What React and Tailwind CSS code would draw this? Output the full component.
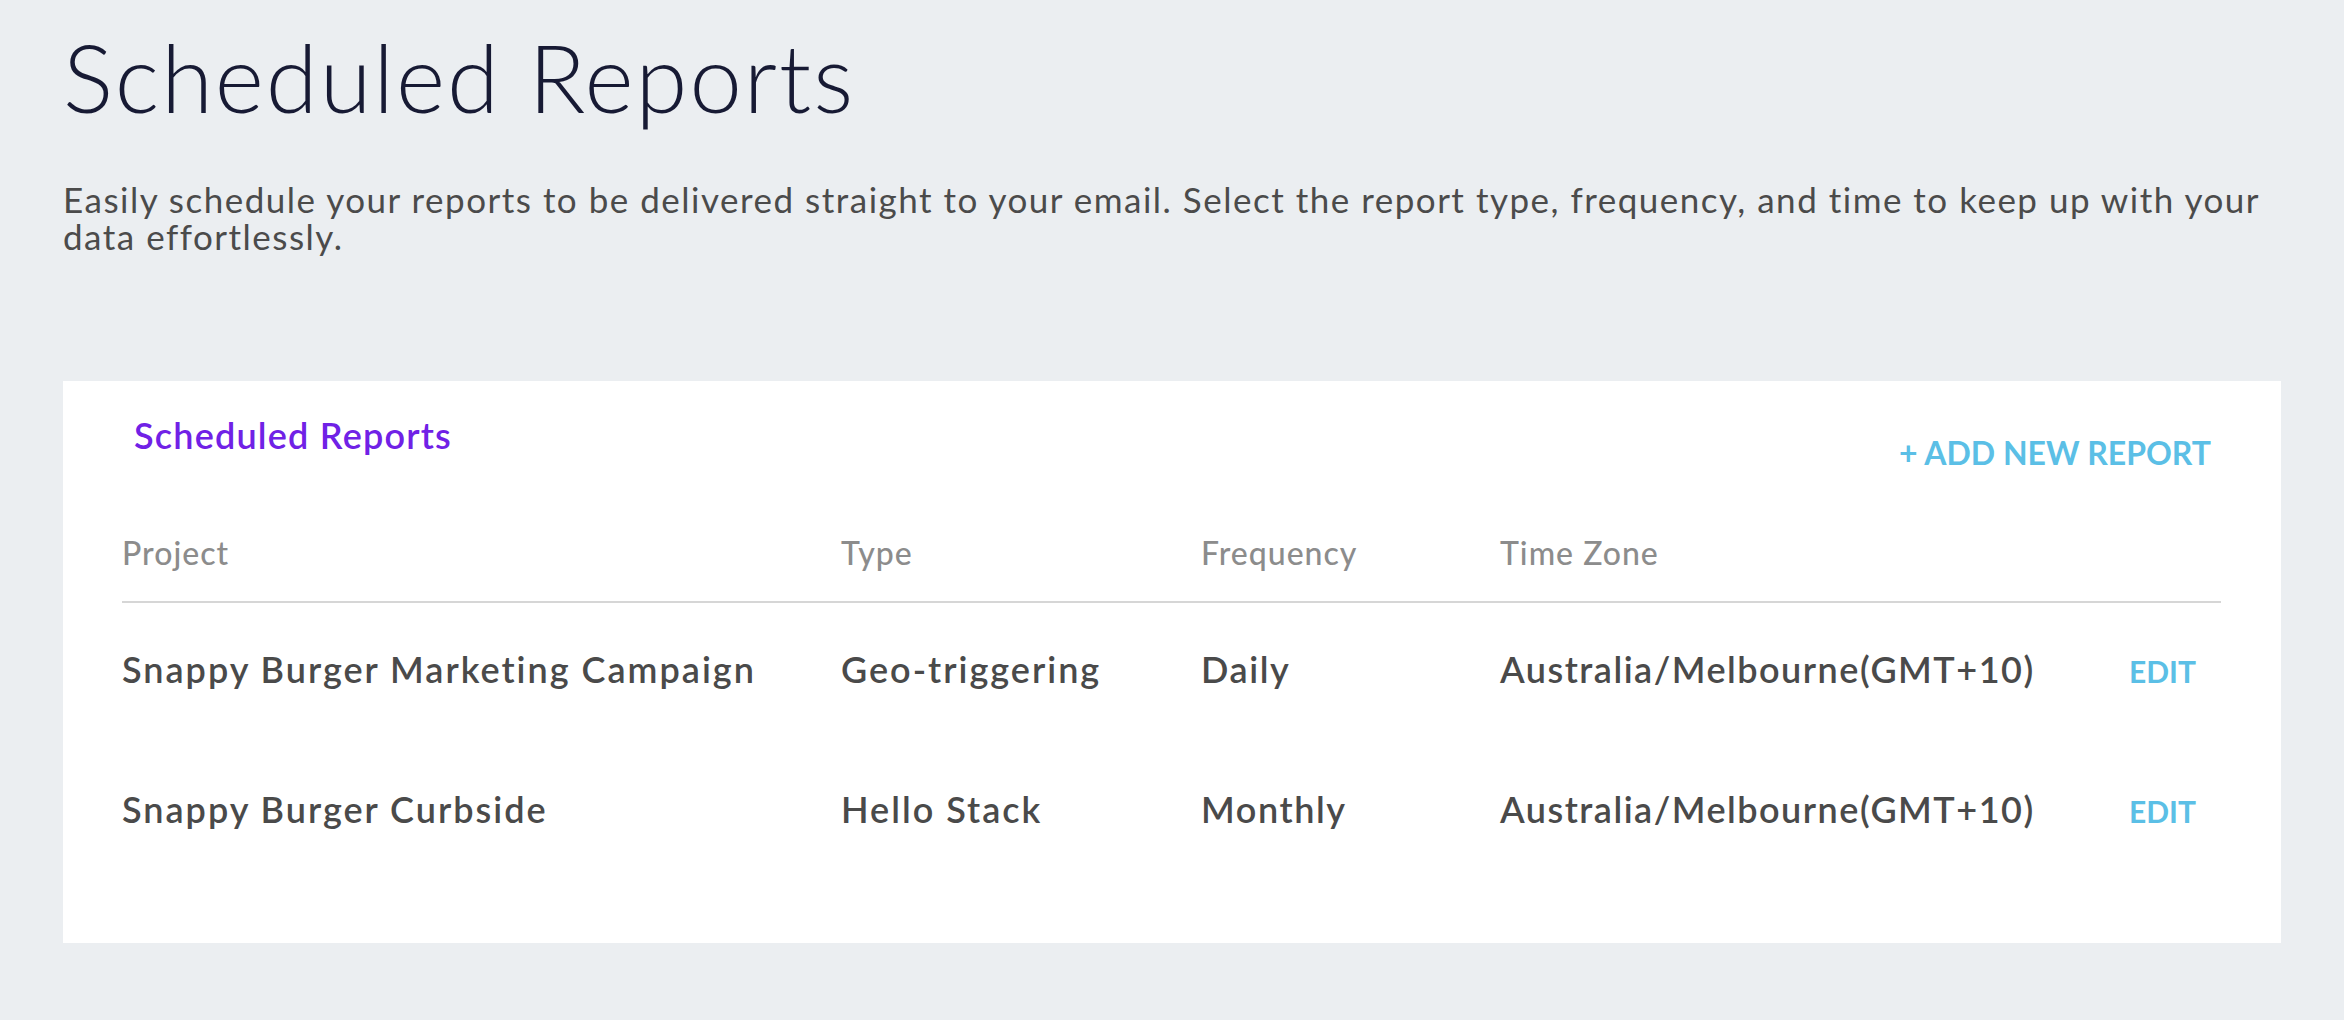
const reports = [
  {
    project: "Snappy Burger Marketing Campaign",
    type: "Geo-triggering",
    frequency: "Daily",
    timezone: "Australia/Melbourne(GMT+10)",
  },
  {
    project: "Snappy Burger Curbside",
    type: "Hello Stack",
    frequency: "Monthly",
    timezone: "Australia/Melbourne(GMT+10)",
  },
];

const cols = "grid grid-cols-[719px_360px_299px_629px_1fr]";

export default function App() {
  return (
    <div className="min-h-screen bg-[#ebeef1] px-[63px] pt-[30px] pb-[77px] font-['Lato',sans-serif]">
      {/* Page header */}
      <h1 className="text-[94px] leading-none font-light tracking-[2px] text-[#171a34]">
        Scheduled Reports
      </h1>
      <p className="mt-[57px] text-[35px] leading-[37px] tracking-[1.5px] text-[#4b4b4b]">
        Easily schedule your reports to be delivered straight to your email.
        Select the report type, frequency, and time to keep up with your data
        effortlessly.
      </p>

      {/* Reports card */}
      <div className="mt-[126px] bg-white pt-[34px] pl-[59px] pr-[60px] pb-[60px]">
        <div className="flex items-start justify-between">
          <h2 className="pl-[12px] text-[36px] leading-[40px] font-semibold tracking-[1.2px] text-[#7021e6]">
            Scheduled Reports
          </h2>
          <button className="mt-[20px] pr-[10px] text-[32px] leading-[36px] font-bold text-[#5bbfe6]">
            + ADD NEW REPORT
          </button>
        </div>

        <div
          className={`${cols} mt-[62px] pb-[28px] border-b-2 border-[#d6d6d6] text-[32px] leading-[40px] font-medium tracking-[1px] text-[#8c8c8c]`}
        >
          <div>Project</div>
          <div>Type</div>
          <div>Frequency</div>
          <div>Time Zone</div>
          <div></div>
        </div>

        {reports.map((r) => (
          <div
            key={r.project}
            className={`${cols} h-[140px] pt-[46px] items-baseline text-[36px] leading-[40px] font-semibold text-[#4a4a4a]`}
          >
            <div className="tracking-[2px]">{r.project}</div>
            <div className="tracking-[2px]">{r.type}</div>
            <div className="tracking-[1.6px]">{r.frequency}</div>
            <div className="tracking-[1.5px]">{r.timezone}</div>
            <div>
              <button className="text-[30px] font-bold text-[#5bbfe6]">
                EDIT
              </button>
            </div>
          </div>
        ))}
      </div>
    </div>
  );
}
